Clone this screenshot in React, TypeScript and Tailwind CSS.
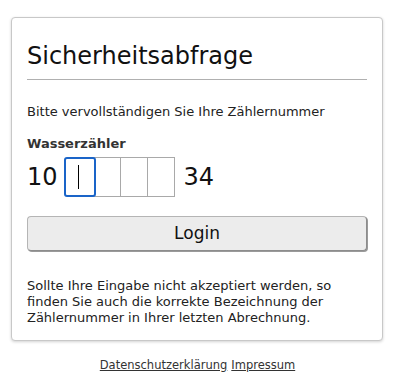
import { useState } from "react";

const font = { fontFamily: '"DejaVu Sans", Verdana, sans-serif' };

function DigitBox({ focused, value, onChange }: { focused?: boolean; value: string; onChange: (v: string) => void }) {
  return (
    <div
      className={
        focused
          ? "relative z-10 -mr-[2px] h-[40px] w-[32px] rounded-[3px] border-2 border-[#1a64c8] bg-white"
          : "-ml-[1px] h-[40px] w-[28px] border border-[#a9a9a9] bg-white"
      }
    >
      <input
        value={value}
        maxLength={1}
        onChange={(e) => onChange(e.target.value)}
        className="h-full w-full bg-transparent text-center text-[24px] outline-none"
      />
      {focused && !value && <span className="absolute left-[12px] top-[6px] h-[24px] w-px bg-black" />}
    </div>
  );
}

export default function App() {
  const [digits, setDigits] = useState(["", "", "", ""]);

  const setDigit = (i: number, v: string) => {
    const next = [...digits];
    next[i] = v;
    setDigits(next);
  };

  return (
    <div className="min-h-[389px] w-[395px] bg-white pt-[17px] text-[#111]" style={font}>
      <div className="ml-[11px] w-[372px] rounded-[4px] border border-[#c8c8c8] bg-white px-[15px] pb-[14px] pt-[24px] shadow-[0_1px_3px_rgba(0,0,0,0.18)]">
        <h1 className="border-b border-[#b0b0b0] pb-[9px] text-[24px] leading-[28px]">Sicherheitsabfrage</h1>

        <p className="mt-[24px] text-[13px] leading-[16px] text-[#222]">Bitte vervollständigen Sie Ihre Zählernummer</p>

        <div className="mt-[16px] text-[13px] font-bold leading-[16px] text-[#333]">Wasserzähler</div>

        <div className="mt-[5px] flex items-center">
          <span className="mr-[6px] text-[24px] leading-[28px]">10</span>
          <div className="flex">
            {digits.map((d, i) => (
              <DigitBox key={i} focused={i === 0} value={d} onChange={(v) => setDigit(i, v)} />
            ))}
          </div>
          <span className="ml-[9px] text-[24px] leading-[28px]">34</span>
        </div>

        <button className="mt-[19px] h-[35px] w-full rounded-[4px] border border-[#b5b5b5] border-b-[#8c8c8c] border-r-[#8c8c8c] bg-[#ececec] text-[17px] text-[#111] shadow-[1px_1px_0_#9a9a9a]">
          Login
        </button>

        <p className="mt-[27px] text-[13px] leading-[16px] text-[#222]">
          Sollte Ihre Eingabe nicht akzeptiert werden, so finden Sie auch die korrekte Bezeichnung der Zählernummer in Ihrer letzten Abrechnung.
        </p>
      </div>

      <div className="mt-[16px] flex justify-center gap-[4px] text-[11.5px] text-[#333]">
        <a href="#" className="underline">Datenschutzerklärung</a>
        <a href="#" className="underline">Impressum</a>
      </div>
    </div>
  );
}
